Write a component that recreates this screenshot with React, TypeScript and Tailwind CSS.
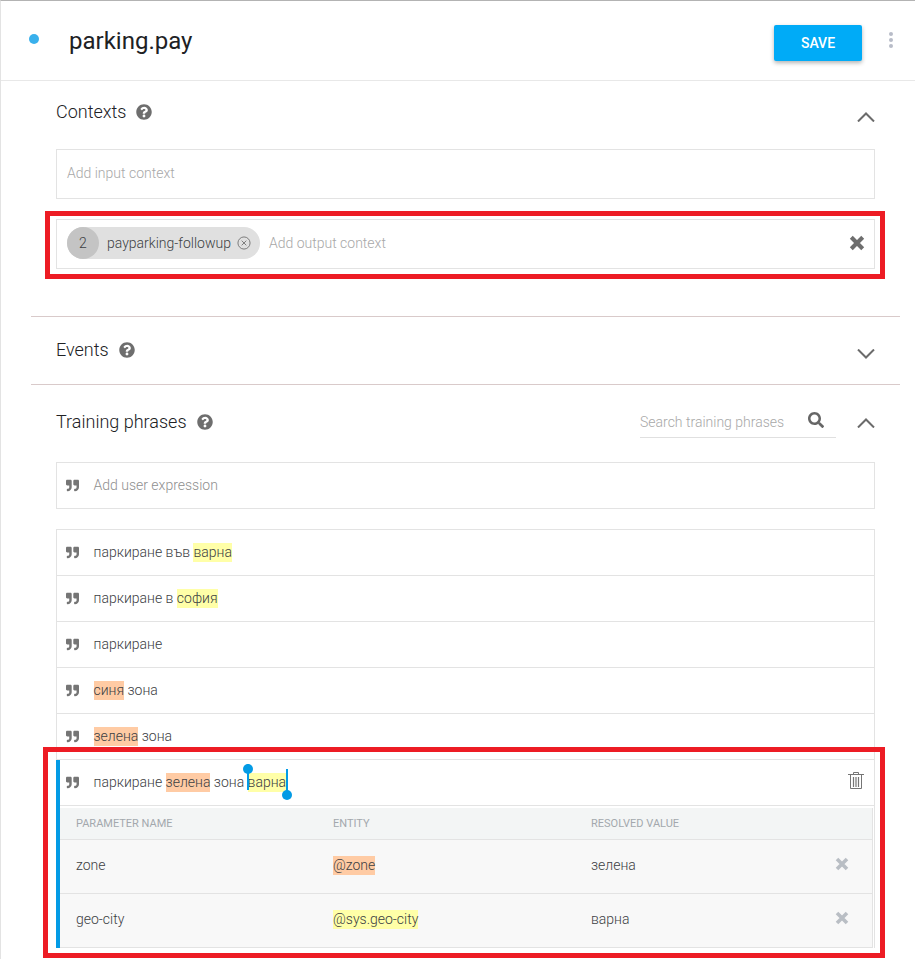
import { FaQuestionCircle, FaQuoteRight, FaSearch } from 'react-icons/fa'

const phrases = [
  [{ t: 'паркиране във ' }, { t: 'варна', c: 'inline-block bg-[#ffffa8] leading-[19px]' }],
  [{ t: 'паркиране в ' }, { t: 'софия', c: 'inline-block bg-[#ffffa8] leading-[19px]' }],
  [{ t: 'паркиране' }],
  [{ t: 'синя', c: 'inline-block bg-[#ffcba4] leading-[19px]' }, { t: ' зона' }],
  [{ t: 'зелена', c: 'inline-block bg-[#ffcba4] leading-[19px]' }, { t: ' зона' }],
]

const params = [
  { name: 'zone', entity: '@zone', color: 'bg-[#ffcba4]', value: 'зелена' },
  { name: 'geo-city', entity: '@sys.geo-city', color: 'bg-[#ffffa8]', value: 'варна' },
]

function Chevron({ up }: { up?: boolean }) {
  return (
    <svg width="18" height="10" viewBox="0 0 18 10" fill="none" stroke="#6b6b6b" strokeWidth="2">
      <path d={up ? 'M1 9.5 9 1.5l8 8' : 'M1 .5l8 8 8-8'} />
    </svg>
  )
}

function Cross({ size, color }: { size: number; color: string }) {
  return (
    <svg width={size} height={size} viewBox="0 0 14 14" fill="none" stroke={color} strokeWidth="3.6" className="shrink-0">
      <path d="M2 2l10 10M12 2 2 12" />
    </svg>
  )
}

function Heading({ label }: { label: string }) {
  return (
    <div className="flex items-center gap-[10px] text-[18px] text-[#202124]">
      {label}
      <FaQuestionCircle className="text-[16px] text-[#6e6e6e]" />
    </div>
  )
}

function Quote() {
  return <FaQuoteRight className="mr-[14.5px] w-[13px] shrink-0 text-[13px] text-[#757575]" />
}

export default function App() {
  return (
    <div className="relative h-[959px] w-[915px] overflow-hidden border-t border-l border-t-[#b3b3b3] border-l-[#e3e3e3] bg-white font-['Roboto',sans-serif] text-[14px] font-light text-[#3c4043]">
      {/* Header */}
      <header className="flex h-[80px] items-center border-b border-[#e8e8e8] pr-[20px] pl-[28px]">
        <span className="mb-[3px] h-[10px] w-[10px] rounded-full bg-[#39b0ec]" />
        <h1 className="mt-[1px] ml-[30px] flex-1 text-[24px] font-normal text-[#202124]">parking.pay</h1>
        <button className="mt-[5px] h-[36px] w-[88px] rounded-[2px] bg-[#00abf7] text-[14px] font-medium text-white shadow-[0_2px_4px_rgba(0,0,0,0.3)]">
          SAVE
        </button>
        <div className="mb-[1px] ml-[25px] flex w-[8px] flex-col items-center gap-[2px]">
          <span className="h-[4px] w-[4px] rounded-full bg-[#b8bcc8]" />
          <span className="h-[4px] w-[4px] rounded-full bg-[#b8bcc8]" />
          <span className="h-[4px] w-[4px] rounded-full bg-[#b8bcc8]" />
        </div>
      </header>

      {/* Contexts */}
      <section className="pr-[40px] pl-[55px]">
        <div className="flex h-[68px] items-center justify-between pb-[7px]">
          <Heading label="Contexts" />
          <div className="mt-[10px]"><Chevron up /></div>
        </div>
        <div className="flex h-[50px] items-center border border-[#e3e3e3] px-[10px] pb-[2px] text-[#a8a8a8]">
          Add input context
        </div>
        <div className="mt-[20px] flex h-[50px] items-center border border-[#e3e3e3] pr-[9px] pb-[2px] pl-[10px] text-[#a8a8a8]">
          <div className="flex h-[32px] items-center rounded-full bg-[#e0e0e0] pr-[9px] text-[#3c4043]">
            <span className="flex h-[32px] w-[32px] items-center justify-center rounded-full bg-[#c4c4c4]">2</span>
            <span className="ml-[8px]">payparking-followup</span>
            <svg className="ml-[6px]" width="14" height="14" viewBox="0 0 15 15" fill="none" stroke="#757575">
              <circle cx="7.5" cy="7.5" r="6.5" />
              <path d="M5 5l5 5M10 5l-5 5" />
            </svg>
          </div>
          <span className="ml-[9px] flex-1">Add output context</span>
          <Cross size={16} color="#6e6e6e" />
        </div>
      </section>

      {/* Events */}
      <section className="mt-[47px] ml-[30px] flex h-[69px] w-[869px] items-center justify-between border-y border-[#d9caca] pr-[25px] pb-[2px] pl-[25px]">
        <Heading label="Events" />
        <div className="mt-[9px]"><Chevron /></div>
      </section>

      {/* Training phrases */}
      <section className="pr-[40px] pl-[55px]">
        <div className="flex h-[77px] items-center justify-between pb-[2px]">
          <div className="mb-[2px]"><Heading label="Training phrases" /></div>
          <div className="flex items-center">
            <div className="flex h-[30px] w-[196px] items-center justify-between border-b border-[#e0e0e0] pr-[12px] text-[#a8a8a8]">
              Search training phrases
              <FaSearch className="mb-[4px] text-[16px] text-[#666666]" />
            </div>
            <div className="mt-[1px] ml-[21px]"><Chevron up /></div>
          </div>
        </div>
        <div className="flex h-[47px] items-center border border-[#e3e3e3] px-[9px] text-[#8f8f8f]">
          <Quote />
          Add user expression
        </div>

        <div className="mt-[20px] border-x border-t border-[#e3e3e3]">
          {phrases.map((parts, i) => (
            <div key={i} className="flex h-[46px] items-center border-b border-[#e3e3e3] px-[9px]">
              <Quote />
              <span className="whitespace-pre">
                {parts.map((p, j) => (
                  <span key={j} className={p.c}>{p.t}</span>
                ))}
              </span>
            </div>
          ))}

          {/* Active phrase with parameters */}
          <div className="-ml-[1px] border-l-[4px] border-[#039be5]">
            <div className="flex h-[46px] items-center border-b border-[#e3e3e3] pr-[10px] pl-[6px]">
              <Quote />
              <span className="relative flex-1 whitespace-pre">
                паркиране <span className="inline-block bg-[#ffcba4] leading-[19px]">зелена</span> зона <span className="inline-block bg-[#ffffa8] leading-[19px]">варна</span>
                <span className="absolute top-[-8px] left-[153.5px] h-[26px] w-[2px] bg-[#039be5]" />
                <span className="absolute top-[-8px] left-[149.5px] h-[10px] w-[10px] rounded-full bg-[#039be5]" />
                <span className="absolute top-[-3px] left-[192.5px] h-[24px] w-[2px] bg-[#039be5]" />
                <span className="absolute top-[18px] left-[188.5px] h-[10px] w-[10px] rounded-full bg-[#039be5]" />
              </span>
              <svg className="mt-[-5px]" width="16" height="18" viewBox="0 0 16 18" fill="none" stroke="#757575">
                <path d="M0 3.5h16M5.5 3V1.5h5V3M2.5 4v13.5h11V4" />
                <path d="M5.5 6v10M8 6v10M10.5 6v10" strokeWidth="1.2" />
              </svg>
            </div>
            <div className="mt-[2px] w-[813px] border-r border-b border-[#e3e3e3] bg-[#f8f8f8]">
              <div className="grid h-[32px] grid-cols-[257px_258px_1fr] items-center border-b border-[#e3e3e3] bg-[#f3f5f5] pt-[1px] pl-[16px] text-[11px] font-normal text-[#a3a8ad]">
                <span>PARAMETER NAME</span>
                <span>ENTITY</span>
                <span>RESOLVED VALUE</span>
              </div>
              {params.map((p, i) => (
                <div key={p.name} className={`grid grid-cols-[257px_258px_1fr_auto] items-center pr-[23px] pb-[2px] pl-[16px] ${i === 0 ? 'h-[54px] border-b border-[#e3e3e3]' : 'h-[53px]'}`}>
                  <span>{p.name}</span>
                  <span><span className={`inline-block leading-[19px] ${p.color}`}>{p.entity}</span></span>
                  <span>{p.value}</span>
                  <div className="mb-[4px]"><Cross size={14} color="#b9bec4" /></div>
                </div>
              ))}
            </div>
          </div>
        </div>
      </section>

      {/* Annotation frames */}
      <div className="absolute top-[210px] left-[44px] h-[68px] w-[840px] border-[5px] border-[#ed1c24]" />
      <div className="absolute top-[746px] left-[42px] h-[211px] w-[842px] border-[5px] border-[#ed1c24]" />
    </div>
  )
}
